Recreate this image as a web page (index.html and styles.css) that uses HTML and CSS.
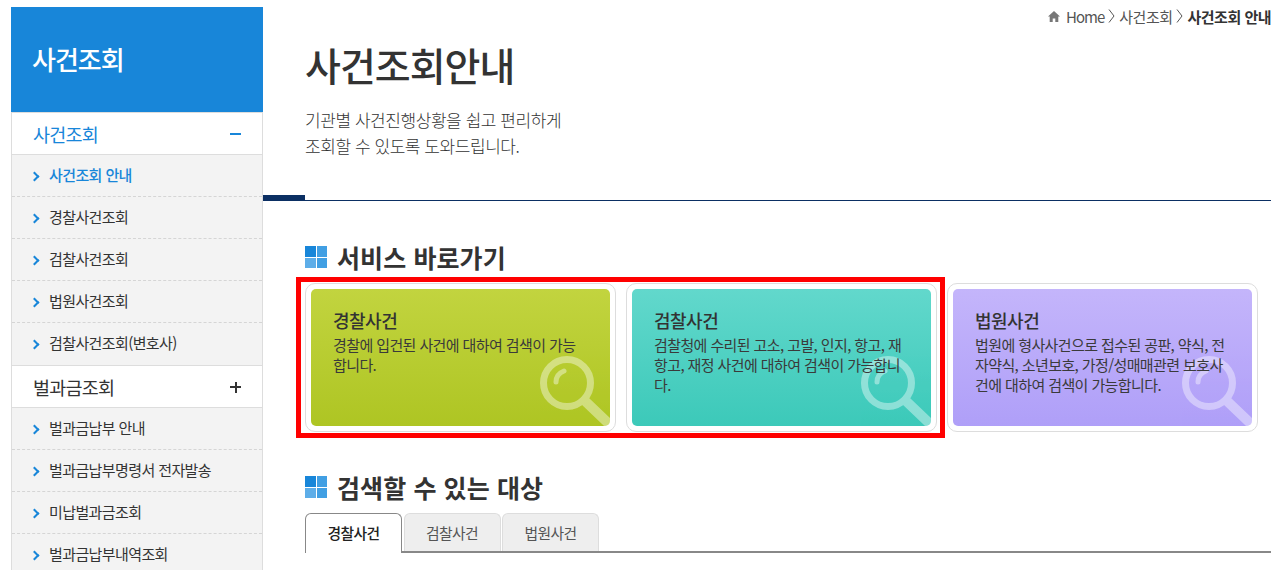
FILE: index.html
```html
<!DOCTYPE html>
<html lang="ko">
	<head>
		<meta charset="UTF-8" />
		<title>사건조회 안내</title>
		<link rel="stylesheet" href="styles.css">
	</head>
	<body>
		<div class="wrap">
			<aside class="side">
				<div class="side-title">사건조회</div>
				<div class="menu-head active">사건조회<span class="minus"></span></div>
				<ul class="menu-list">
					<li class="active">사건조회 안내</li>
					<li>경찰사건조회</li>
					<li>검찰사건조회</li>
					<li>법원사건조회</li>
					<li>검찰사건조회(변호사)</li>
				</ul>
				<div class="menu-head">벌과금조회<span class="plus"></span></div>
				<ul class="menu-list">
					<li>벌과금납부 안내</li>
					<li>벌과금납부명령서 전자발송</li>
					<li>미납벌과금조회</li>
					<li>벌과금납부내역조회</li>
				</ul>
			</aside>

			<main class="content">
				<div class="breadcrumb">
					<svg class="home-icon" width="12" height="11" viewBox="0 0 12 11"><path d="M6 0 0 5.500h1.700V11h3V7.500h2.600V11h3V5.500H12z" fill="#777"/></svg>
					<span class="crumb-home">Home</span>
					<svg width="7" height="14" viewBox="0 0 7 14"><path d="M1 .5l5 6.500-5 6.500" fill="none" stroke="#555"/></svg>
					<span>사건조회</span>
					<svg width="7" height="14" viewBox="0 0 7 14"><path d="M1 .5l5 6.500-5 6.500" fill="none" stroke="#555"/></svg>
					<strong>사건조회 안내</strong>
				</div>

				<header class="page-head">
					<h1>사건조회안내</h1>
					<p>기관별 사건진행상황을 쉽고 편리하게<br />조회할 수 있도록 도와드립니다.</p>
				</header>

				<section class="section">
					<h2><span class="square-icon"><i></i><i></i><i></i><i></i></span>서비스 바로가기</h2>
					<div class="cards">
						<div class="highlight"></div>
						<a class="card card-green">
							<h3>경찰사건</h3>
							<p>경찰에 입건된 사건에 대하여 검색이 가능합니다.</p>
							<svg class="glass" width="72" height="72" viewBox="0 0 72 72"><circle cx="29" cy="29" r="23.500" fill="none" stroke="#fff" stroke-width="7"/><path d="M47 47l22 21" stroke="#fff" stroke-width="10" stroke-linecap="round"/><path d="M18 28c0-5 3-9 8-11" fill="none" stroke="#fff" stroke-width="5" stroke-linecap="round"/></svg>
						</a>
						<a class="card card-teal">
							<h3>검찰사건</h3>
							<p>검찰청에 수리된 고소, 고발, 인지, 항고, 재항고, 재정 사건에 대하여 검색이 가능합니다.</p>
							<svg class="glass" width="72" height="72" viewBox="0 0 72 72"><circle cx="29" cy="29" r="23.500" fill="none" stroke="#fff" stroke-width="7"/><path d="M47 47l22 21" stroke="#fff" stroke-width="10" stroke-linecap="round"/><path d="M18 28c0-5 3-9 8-11" fill="none" stroke="#fff" stroke-width="5" stroke-linecap="round"/></svg>
						</a>
						<a class="card card-purple">
							<h3>법원사건</h3>
							<p>법원에 형사사건으로 접수된 공판, 약식, 전자약식, 소년보호, 가정/성매매관련 보호사건에 대하여 검색이 가능합니다.</p>
							<svg class="glass" width="72" height="72" viewBox="0 0 72 72"><circle cx="29" cy="29" r="23.500" fill="none" stroke="#fff" stroke-width="7"/><path d="M47 47l22 21" stroke="#fff" stroke-width="10" stroke-linecap="round"/><path d="M18 28c0-5 3-9 8-11" fill="none" stroke="#fff" stroke-width="5" stroke-linecap="round"/></svg>
						</a>
					</div>
				</section>

				<section class="section section-target">
					<h2><span class="square-icon"><i></i><i></i><i></i><i></i></span>검색할 수 있는 대상</h2>
					<div class="tabs">
						<div class="tab active">경찰사건</div>
						<div class="tab">검찰사건</div>
						<div class="tab">법원사건</div>
					</div>
				</section>
			</main>
		</div>
	</body>
</html>
```

FILE: styles.css
```css
* {
	box-sizing: border-box;
	margin: 0;
	padding: 0;
}

html,
body {
	height: 570px;
	overflow: hidden;
}

body {
	font-family: 'Noto Sans CJK KR', 'Noto Sans', sans-serif;
	background-color: #fff;
	color: #333;
}

.wrap {
	display: flex;
	padding: 7px 5px 0 11px;
}

/* Sidebar */
.side {
	width: 252px;
	flex: none;
}

.side-title {
	height: 105px;
	padding: 31px 0 0 21px;
	background-color: #1886d9;
	color: #fff;
	font-size: 26px;
	font-weight: 500;
	line-height: 42px;
	letter-spacing: -1px;
}

.menu-head {
	display: flex;
	align-items: center;
	justify-content: space-between;
	height: 43px;
	padding: 1px 21px 0 21px;
	border: 1px solid #ddd;
	font-size: 18.500px;
	letter-spacing: -0.800px;
	color: #333;
}

.menu-head.active {
	color: #1886d9;
}

.minus {
	width: 11px;
	height: 2px;
	background-color: #1886d9;
}

.plus {
	width: 11px;
	height: 11px;
	background: linear-gradient(#333, #333) center / 11px 2px no-repeat,
		linear-gradient(#333, #333) center / 2px 11px no-repeat;
}

.menu-list {
	list-style: none;
	background-color: #f3f3f3;
	border-left: 1px solid #ddd;
	border-right: 1px solid #ddd;
}

.menu-list li {
	position: relative;
	height: 42px;
	padding-left: 37px;
	border-bottom: 1px dashed #d5d5d5;
	font-size: 15px;
	line-height: 39px;
	letter-spacing: -0.600px;
	color: #333;
}

.menu-list li:last-child {
	border-bottom: 0;
}

.menu-list li.active {
	color: #1886d9;
	font-weight: 500;
}

.menu-list li::before {
	content: '';
	position: absolute;
	left: 19px;
	top: 18px;
	width: 5px;
	height: 5px;
	border-top: 2px solid #1886d9;
	border-right: 2px solid #1886d9;
	transform: rotate(45deg);
}

/* Main */
.content {
	width: 1008px;
	flex: none;
	margin-top: -7px;
}

.breadcrumb {
	display: flex;
	align-items: center;
	justify-content: flex-end;
	gap: 4px;
	height: 32px;
	font-size: 15px;
	letter-spacing: -0.500px;
	color: #555;
}

.home-icon {
	margin-right: 2px;
}

.crumb-home {
	letter-spacing: -1px;
}

.breadcrumb strong {
	color: #333;
	font-weight: 700;
}

.page-head {
	position: relative;
	height: 169px;
	padding: 7px 0 0 42px;
	border-bottom: 1px solid #0b2f63;
}

.page-head::after {
	content: '';
	position: absolute;
	left: 0;
	bottom: -1px;
	width: 42px;
	height: 6px;
	background-color: #0b2f63;
}

h1 {
	font-size: 39px;
	font-weight: 500;
	line-height: 50px;
	letter-spacing: -1px;
	color: #333;
}

.page-head p {
	margin-top: 18px;
	font-size: 17px;
	font-weight: 300;
	line-height: 26px;
	letter-spacing: -0.440px;
}

.section {
	padding-left: 42px;
}

h2 {
	display: flex;
	align-items: center;
	gap: 10px;
	margin-top: 39px;
	font-size: 25px;
	font-weight: 700;
	line-height: 34px;
	letter-spacing: 0.100px;
	color: #333;
}

.square-icon {
	display: grid;
	grid-template-columns: 1fr 1fr;
	gap: 1px;
	width: 22px;
	height: 22px;
}

.square-icon i:nth-child(1) {
	background-color: #1886d9;
}

.square-icon i:nth-child(2),
.square-icon i:nth-child(4) {
	background-color: #419fe3;
}

.square-icon i:nth-child(3) {
	background-color: #5dade8;
}

/* Cards */
.cards {
	position: relative;
	display: flex;
	gap: 10px;
	margin-top: 9px;
}

.highlight {
	position: absolute;
	left: -9px;
	top: -6px;
	width: 649px;
	height: 161px;
	border: 5px solid #f00;
	z-index: 2;
}

.card {
	position: relative;
	display: block;
	width: 311px;
	height: 149px;
	padding: 23px 28px 0 27px;
	border: 1px solid #ddd;
	border-radius: 10px;
	overflow: hidden;
}

.card::before {
	content: '';
	position: absolute;
	left: 5px;
	top: 5px;
	right: 5px;
	bottom: 5px;
	border-radius: 5px;
	background: var(--card-bg);
}

.card-green {
	--card-bg: linear-gradient(#c2d43f, #aec523);
}

.card-teal {
	--card-bg: linear-gradient(#62d8cc, #3cc9b9);
}

.card-purple {
	--card-bg: linear-gradient(#c4b5fb, #af9ff8);
}

.card h3,
.card p {
	position: relative;
	z-index: 1;
}

.card h3 {
	font-size: 18px;
	font-weight: 500;
	line-height: 26px;
	letter-spacing: -0.500px;
	color: #333;
}

.card p {
	margin-top: 2px;
	font-size: 15px;
	line-height: 20px;
	letter-spacing: -0.600px;
	color: #3a3a3a;
}

.glass {
	position: absolute;
	right: 5px;
	bottom: 5px;
	opacity: 0.4;
}

/* Tabs */
.section-target h2 {
	margin-top: 38px;
}

.tabs {
	display: flex;
	gap: 1.500px;
	margin-top: 9px;
	height: 40px;
	border-bottom: 2px solid #888;
}

.tab {
	width: 97px;
	height: 38px;
	border: 1px solid #ddd;
	border-bottom: 0;
	border-radius: 6px 6px 0 0;
	background-color: #eee;
	font-size: 14.800px;
	line-height: 38px;
	letter-spacing: -0.600px;
	text-align: center;
	color: #555;
}

.tab.active {
	height: 40px;
	border-color: #888;
	background-color: #fff;
	color: #222;
	font-weight: 500;
}
```
